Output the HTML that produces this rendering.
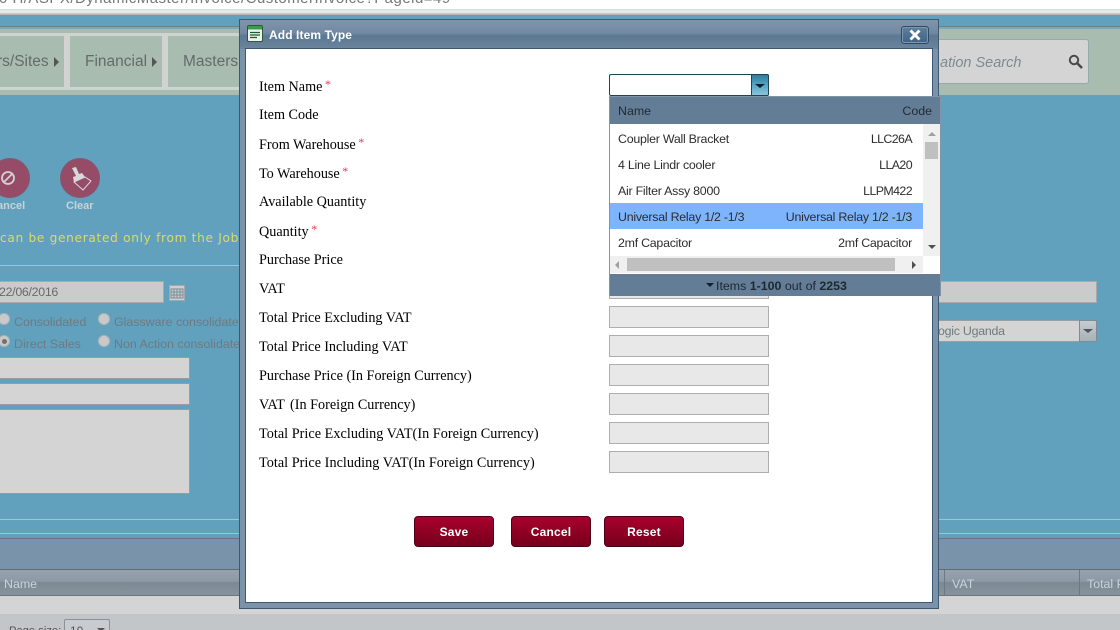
<!DOCTYPE html>
<html><head><meta charset="utf-8">
<style>
html,body{margin:0;padding:0;width:1120px;height:630px;overflow:hidden;background:#62a1be;}
*{box-sizing:border-box}
.a{position:absolute;white-space:nowrap}
body{font-family:"Liberation Sans",sans-serif;position:relative}
.s{font-family:"Liberation Serif",serif;font-size:14.2px;color:#000;left:259px;line-height:16px}
.s i{color:#e8344e;font-style:normal;font-size:12px;position:relative;top:-3px;left:-1px}
.f{left:609px;width:160px;height:22px;background:#e8e8e8;border:1px solid #aeaeae}
.u{font-size:12.4px;color:#2d2d2d;line-height:16px}
.w{letter-spacing:-.25px}
.c{letter-spacing:-.6px}
.g{font-size:12.4px;color:#6d7a80;line-height:16px}
.b{background:#cbcbcb;border:1px solid #a9a9a9}
.d{background:#d4d4d4;border:1px solid #9b9b9b}
.r{width:12px;height:12px;border-radius:50%;background:#c9c9c9;border:1px solid #a9b4b8}
.btn{top:516px;width:80px;height:31px;border:1px solid #4e0018;border-radius:4px;background:linear-gradient(#a8002c,#76001c);color:#fff;font:bold 12px/30px "Liberation Sans",sans-serif;text-align:center;letter-spacing:.2px}
.tab{top:36px;height:51px;background:#a9bcb0;border-right:0}
.m{font-size:15.5px;color:#646c68;line-height:18px}
.ar{width:0;height:0;border-left:5px solid #555;border-top:5px solid transparent;border-bottom:5px solid transparent}
.rt{text-align:right}
</style></head><body>

<!-- browser top -->
<div class="a" style="left:0;top:0;width:1120px;height:10px;background:#fff;overflow:hidden">
  <div class="a" style="left:-1px;top:-10px;font-size:15px;line-height:18px;color:#777;letter-spacing:.48px">0 H/ASPX/DynamicMaster/Invoice/CustomerInvoice?Pageid=49</div>
</div>
<div class="a" style="left:0;top:9px;width:1120px;height:6px;background:linear-gradient(#d8d8d8,#f0f0f0 50%,#a9a9a9)"></div>

<!-- nav band -->
<div class="a" style="left:0;top:26px;width:1120px;height:1px;background:#6f7f88"></div>
<div class="a" style="left:0;top:27px;width:1120px;height:2px;background:#7fa7b4"></div>
<div class="a" style="left:0;top:29px;width:1120px;height:66px;background:#a9bcb0"></div>
<div class="a" style="left:0;top:33px;width:240px;height:57px;background:#d2d2d2"></div>
<div class="a tab" style="left:0;width:64px"></div>
<div class="a tab" style="left:70px;width:92px"></div>
<div class="a tab" style="left:168px;width:72px"></div>
<div class="a m" style="left:-3px;top:53px">rs/Sites</div>
<div class="a ar" style="left:54px;top:57px"></div>
<div class="a m" style="left:85px;top:53px">Financial</div>
<div class="a ar" style="left:152px;top:57px"></div>
<div class="a m" style="left:183px;top:53px">Masters</div>
<div class="a" style="left:900px;top:39px;width:189px;height:45px;background:#d4d4d4;border:1px solid #9aa8ac;border-radius:3px"></div>
<div class="a" style="left:940px;top:54px;font-size:14.5px;font-style:italic;color:#7e8a8c;line-height:18px">ation Search</div>
<svg class="a" style="left:1067px;top:53px" width="18" height="18" viewBox="0 0 18 18"><circle cx="7" cy="7" r="4.2" fill="none" stroke="#4a4a4a" stroke-width="2"/><path d="M10 10l5 5" stroke="#4a4a4a" stroke-width="2.6"/></svg>

<!-- action icons -->
<div class="a" style="left:-10px;top:158px;width:40px;height:40px;border-radius:50%;background:#964b67;border:1px solid #81596f"></div>
<svg class="a" style="left:-3px;top:166px" width="22" height="24" viewBox="0 0 22 24"><circle cx="11" cy="12" r="6" fill="none" stroke="#d2d2d2" stroke-width="1.8"/><path d="M7 16L15 8" stroke="#d2d2d2" stroke-width="1.8"/></svg>
<div class="a" style="left:60px;top:158px;width:40px;height:40px;border-radius:50%;background:#964b67;border:1px solid #81596f"></div>
<svg class="a" style="left:70px;top:166px" width="24" height="26" viewBox="0 0 24 26"><path d="M2 2l4-1 3 7 3-1 3 4-11 5-1-5 3-1z" fill="#d8d8d8"/><path d="M4 16l11-5 6 4-8 9z" fill="none" stroke="#d8d8d8" stroke-width="1"/></svg>
<div class="a" style="left:-3px;top:200px;font-size:11px;font-weight:bold;color:#c8d2d6;line-height:13px">ancel</div>
<div class="a" style="left:66px;top:200px;font-size:11px;font-weight:bold;color:#c8d2d6;line-height:13px">Clear</div>

<div class="a" style="left:0;top:230px;font-family:'DejaVu Sans',sans-serif;font-size:12.2px;color:#dadc5c;line-height:16px;letter-spacing:.67px">can be generated only from the Job</div>
<div class="a" style="left:0;top:265px;width:240px;height:1px;background:#a8c0cc"></div>

<!-- background form -->
<div class="a b" style="left:-10px;top:281px;width:174px;height:22px"></div>
<div class="a" style="left:-1px;top:284px;font-size:12.4px;color:#6a6a6a;line-height:16px;letter-spacing:-.3px">22/06/2016</div>
<svg class="a" style="left:169px;top:285px" width="16" height="16" viewBox="0 0 16 16"><rect x=".5" y=".5" width="15" height="15" fill="#c8d0d4" stroke="#a4a8aa"/><path d="M2 4h12v9H2zM2 7h12M2 10h12M5 4v9M8 4v9M11 4v9" fill="none" stroke="#7c8c94" stroke-width="1"/></svg>
<div class="a r" style="left:-2px;top:313px"></div>
<div class="a g" style="left:14px;top:314px">Consolidated</div>
<div class="a r" style="left:98px;top:313px"></div>
<div class="a g" style="left:114px;top:314px">Glassware consolidate</div>
<div class="a r" style="left:-2px;top:335px"></div>
<div class="a" style="left:2px;top:339px;width:5px;height:5px;border-radius:50%;background:#707070"></div>
<div class="a g" style="left:14px;top:336px">Direct Sales</div>
<div class="a r" style="left:98px;top:335px"></div>
<div class="a g" style="left:114px;top:336px;width:125px;overflow:hidden">Non Action consolidate</div>
<div class="a d" style="left:-5px;top:357px;width:195px;height:22px"></div>
<div class="a d" style="left:-5px;top:383px;width:195px;height:22px"></div>
<div class="a d" style="left:-5px;top:409px;width:195px;height:85px"></div>

<div class="a b" style="left:930px;top:281px;width:167px;height:22px"></div>
<div class="a" style="left:930px;top:320px;width:167px;height:22px;background:#d4d4d4;border:1px solid #93a0a6;border-radius:2px"></div>
<div class="a" style="left:1079px;top:320px;width:18px;height:22px;background:linear-gradient(#c4cdd2,#a6b1b8);border:1px solid #7e8c94;border-radius:0 2px 2px 0"></div>
<div class="a" style="left:1083px;top:329px;width:0;height:0;border-left:5px solid transparent;border-right:5px solid transparent;border-top:4px solid #555"></div>
<div class="a g w" style="left:938px;top:323px;color:#707a7e">ogic Uganda</div>

<!-- bottom lines and grid -->
<div class="a" style="left:0;top:519px;width:1120px;height:1px;background:#a6c2ce"></div>
<div class="a" style="left:0;top:533px;width:1120px;height:1px;background:#a6c2ce"></div>
<div class="a" style="left:0;top:538px;width:1120px;height:1px;background:#68757f"></div>
<div class="a" style="left:0;top:539px;width:1120px;height:31px;background:#7893aa"></div>
<div class="a" style="left:0;top:569px;width:1120px;height:1px;background:#5f6b75"></div>
<div class="a" style="left:0;top:570px;width:1120px;height:25px;background:linear-gradient(#97a2ae,#8d99a3 45%,#7c8994 50%,#87939c)"></div>
<div class="a" style="left:0;top:595px;width:1120px;height:1px;background:#6a757e"></div>
<div class="a" style="left:0;top:596px;width:1120px;height:18px;background:#d4d4d4"></div>
<div class="a" style="left:0;top:614px;width:1120px;height:16px;background:#c2c6c9"></div>
<div class="a" style="left:4px;top:576px;font-size:12.4px;color:#c8d4dc;line-height:16px">Name</div>
<div class="a" style="left:952px;top:576px;font-size:12.4px;color:#c8d4dc;line-height:16px">VAT</div>
<div class="a" style="left:1087px;top:576px;font-size:12.4px;color:#c8d4dc;line-height:16px">Total P</div>
<div class="a" style="left:944px;top:570px;width:1px;height:25px;background:#6d7882"></div>
<div class="a" style="left:1079px;top:570px;width:1px;height:25px;background:#6d7882"></div>
<div class="a" style="left:9px;top:624px;font-size:11.2px;color:#555;line-height:14px">Page size:</div>
<div class="a" style="left:64px;top:619px;width:46px;height:20px;background:#c8ccd0;border:1px solid #8a9298;border-radius:2px"></div>
<div class="a" style="left:70px;top:624px;font-size:12px;color:#555;line-height:14px">10</div>
<div class="a" style="left:97px;top:628px;width:0;height:0;border-left:4px solid transparent;border-right:4px solid transparent;border-top:4px solid #555"></div>

<!-- modal -->
<div class="a" style="left:239px;top:19px;width:700px;height:590px;background:#7a92aa;border:1px solid #3f5872"></div>
<div class="a" style="left:240px;top:20px;width:698px;height:29px;background:linear-gradient(#7f95ab,#7189a1 45%,#5b7791 55%,#6c859e)"></div>
<div class="a" style="left:245px;top:48px;width:688px;height:555px;background:#fff;border:1px solid #3f5872"></div>
<svg class="a" style="left:247px;top:25px" width="16" height="17" viewBox="0 0 16 17"><rect x=".5" y=".5" width="15" height="16" rx="1.5" fill="#eef3ee" stroke="#2a5a3a"/><rect x="1" y="1" width="14" height="3.5" fill="#3c9a4a"/><path d="M3 7.5h10M3 10h10M3 12.5h7" stroke="#1d5a30" stroke-width="1.2"/></svg>
<div class="a" style="left:269px;top:28px;font-size:12px;font-weight:bold;color:#fff;line-height:15px;letter-spacing:.1px">Add Item Type</div>
<div class="a" style="left:901px;top:26px;width:28px;height:18px;background:linear-gradient(#5f7f9e,#3f6485);border:1px solid #2e4a66;border-radius:3px;box-shadow:inset 0 0 0 1px #7e97b0"></div>
<svg class="a" style="left:908px;top:29px" width="14" height="12" viewBox="0 0 14 12"><path d="M2.5 1.5l9 9M11.5 1.5l-9 9" stroke="#fff" stroke-width="2.8"/></svg>

<!-- labels -->
<div class="a s" style="top:79px">Item Name <i>*</i></div>
<div class="a s" style="top:107px">Item Code</div>
<div class="a s" style="top:137px">From Warehouse <i>*</i></div>
<div class="a s" style="top:166px">To Warehouse <i>*</i></div>
<div class="a s" style="top:194px">Available Quantity</div>
<div class="a s" style="top:224px">Quantity <i>*</i></div>
<div class="a s" style="top:252px">Purchase Price</div>
<div class="a s" style="top:281px">VAT</div>
<div class="a s" style="top:310px">Total Price Excluding VAT</div>
<div class="a s" style="top:339px">Total Price Including VAT</div>
<div class="a s" style="top:368px">Purchase Price (In Foreign Currency)</div>
<div class="a s" style="top:397px">VAT <span style="margin-left:2px">(In Foreign Currency)</span></div>
<div class="a s" style="top:426px;letter-spacing:.04px">Total Price Excluding VAT(In Foreign Currency)</div>
<div class="a s" style="top:455px;letter-spacing:.04px">Total Price Including VAT(In Foreign Currency)</div>

<!-- fields -->
<div class="a f" style="top:277px"></div>
<div class="a f" style="top:306px"></div>
<div class="a f" style="top:335px"></div>
<div class="a f" style="top:364px"></div>
<div class="a f" style="top:393px"></div>
<div class="a f" style="top:422px"></div>
<div class="a f" style="top:451px"></div>

<!-- combobox -->
<div class="a" style="left:609px;top:74px;width:160px;height:22px;background:#fff;border:1px solid #1f4650;border-radius:2px"></div>
<div class="a" style="left:751px;top:74px;width:18px;height:22px;background:linear-gradient(#2e7d9c,#5aa8c8 55%,#8cc4dc);border:1px solid #1f4650;border-radius:0 2px 2px 0"></div>
<div class="a" style="left:755px;top:84px;width:0;height:0;border-left:5px solid transparent;border-right:5px solid transparent;border-top:4px solid #10222c"></div>

<!-- dropdown -->
<div class="a" style="left:609px;top:96px;width:332px;height:200px;background:#fff;border:1px solid #8095a8"></div>
<div class="a" style="left:610px;top:97px;width:330px;height:27px;background:#647d96"></div>
<div class="a u" style="left:618px;top:103px;color:#1f2a33">Name</div>
<div class="a u" style="right:188px;top:103px;color:#1f2a33">Code</div>

<div class="a u w" style="left:618px;top:131px">Coupler Wall Bracket</div>
<div class="a u c" style="right:208px;top:131px">LLC26A</div>
<div class="a u w" style="left:618px;top:157px">4 Line Lindr cooler</div>
<div class="a u c" style="right:208px;top:157px">LLA20</div>
<div class="a u w" style="left:618px;top:183px">Air Filter Assy 8000</div>
<div class="a u c" style="right:208px;top:183px">LLPM422</div>
<div class="a" style="left:610px;top:203px;width:313px;height:26px;background:#7db4fb"></div>
<div class="a u w" style="left:618px;top:209px">Universal Relay 1/2 -1/3</div>
<div class="a u w" style="right:208px;top:209px">Universal Relay 1/2 -1/3</div>
<div class="a u w" style="left:618px;top:235px">2mf Capacitor</div>
<div class="a u w" style="right:208px;top:235px">2mf Capacitor</div>

<!-- vertical scrollbar -->
<div class="a" style="left:923px;top:124px;width:17px;height:132px;background:#f0f0f0"></div>
<div class="a" style="left:925px;top:142px;width:13px;height:17px;background:#c0c0c0"></div>
<div class="a" style="left:928px;top:132px;width:0;height:0;border-left:4px solid transparent;border-right:4px solid transparent;border-bottom:4px solid #a0a0a0"></div>
<div class="a" style="left:928px;top:245px;width:0;height:0;border-left:4px solid transparent;border-right:4px solid transparent;border-top:4px solid #505050"></div>
<!-- horizontal scrollbar -->
<div class="a" style="left:610px;top:256px;width:313px;height:17px;background:#f0f0f0"></div>
<div class="a" style="left:627px;top:258px;width:268px;height:13px;background:#c0c0c0"></div>
<div class="a" style="left:615px;top:261px;width:0;height:0;border-top:4px solid transparent;border-bottom:4px solid transparent;border-right:4px solid #a0a0a0"></div>
<div class="a" style="left:912px;top:261px;width:0;height:0;border-top:4px solid transparent;border-bottom:4px solid transparent;border-left:4px solid #505050"></div>
<!-- footer -->
<div class="a" style="left:610px;top:274px;width:330px;height:22px;background:#647d96"></div>
<div class="a" style="left:706px;top:283px;width:0;height:0;border-left:4px solid transparent;border-right:4px solid transparent;border-top:4px solid #10202c"></div>
<div class="a u" style="left:716px;top:278px;color:#1c2833">Items <b>1-100</b> out of <b>2253</b></div>

<!-- buttons -->
<div class="a btn" style="left:414px">Save</div>
<div class="a btn" style="left:511px">Cancel</div>
<div class="a btn" style="left:604px">Reset</div>

</body></html>
